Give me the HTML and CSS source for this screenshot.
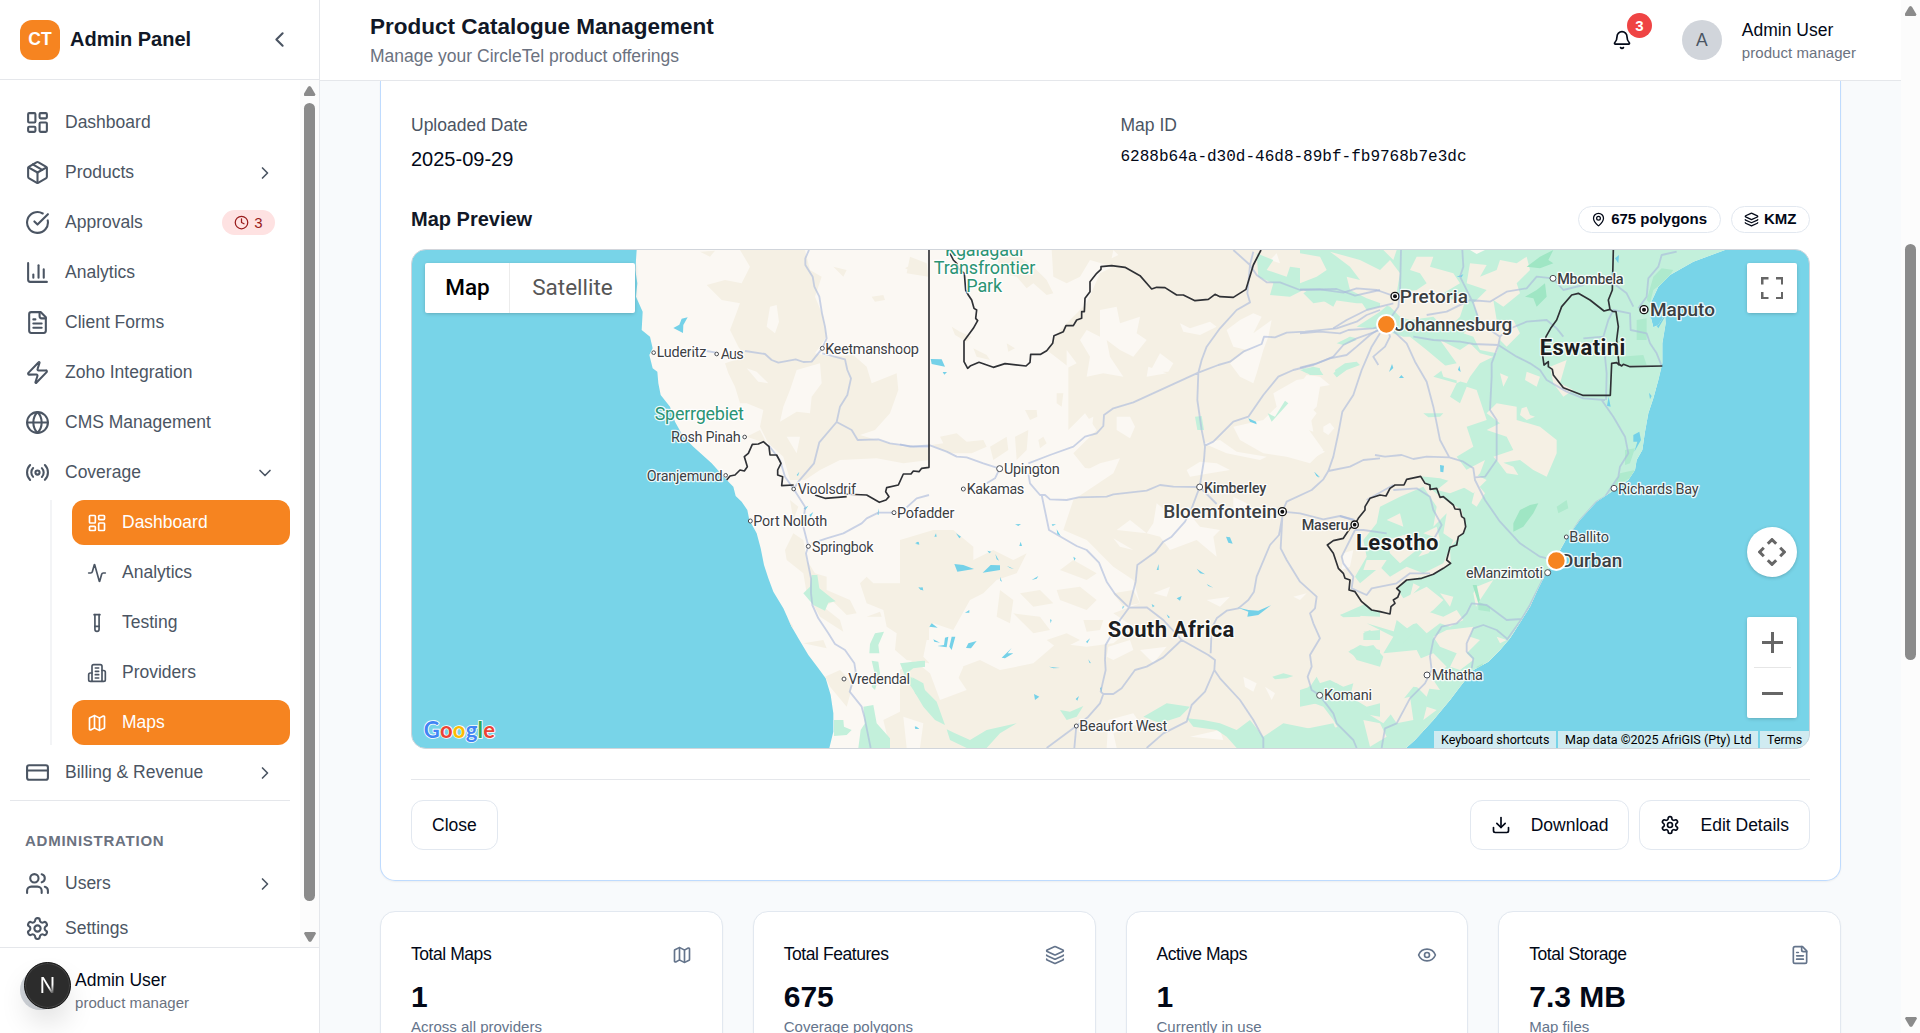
FILE: index.html
```html
<!DOCTYPE html>
<html lang="en">
<head>
<meta charset="utf-8">
<title>Admin Panel - Coverage Maps</title>
<link rel="stylesheet" href="styles.css">
</head>
<body>
<svg class="sprite" aria-hidden="true">
  <symbol id="i-dash" viewBox="0 0 24 24"><rect width="7" height="9" x="3" y="3" rx="1"/><rect width="7" height="5" x="14" y="3" rx="1"/><rect width="7" height="9" x="14" y="12" rx="1"/><rect width="7" height="5" x="3" y="16" rx="1"/></symbol>
  <symbol id="i-box" viewBox="0 0 24 24"><path d="M11 21.73a2 2 0 0 0 2 0l7-4A2 2 0 0 0 21 16V8a2 2 0 0 0-1-1.73l-7-4a2 2 0 0 0-2 0l-7 4A2 2 0 0 0 3 8v8a2 2 0 0 0 1 1.73z"/><path d="M12 22V12"/><path d="m3.3 7 8.7 5 8.7-5"/><path d="m7.5 4.27 9 5.15"/></symbol>
  <symbol id="i-check" viewBox="0 0 24 24"><path d="M21.801 10A10 10 0 1 1 17 3.335"/><path d="m9 11 3 3L22 4"/></symbol>
  <symbol id="i-chart" viewBox="0 0 24 24"><path d="M3 3v16a2 2 0 0 0 2 2h16"/><path d="M18 17V9"/><path d="M13 17V5"/><path d="M8 17v-3"/></symbol>
  <symbol id="i-file" viewBox="0 0 24 24"><path d="M15 2H6a2 2 0 0 0-2 2v16a2 2 0 0 0 2 2h12a2 2 0 0 0 2-2V7Z"/><path d="M14 2v4a2 2 0 0 0 2 2h4"/><path d="M10 9H8"/><path d="M16 13H8"/><path d="M16 17H8"/></symbol>
  <symbol id="i-zap" viewBox="0 0 24 24"><path d="M4 14a1 1 0 0 1-.78-1.63l9.9-10.2a.5.5 0 0 1 .86.46l-1.92 6.02A1 1 0 0 0 13 10h7a1 1 0 0 1 .78 1.63l-9.9 10.2a.5.5 0 0 1-.86-.46l1.92-6.02A1 1 0 0 0 11 14z"/></symbol>
  <symbol id="i-globe" viewBox="0 0 24 24"><circle cx="12" cy="12" r="10"/><path d="M12 2a14.5 14.5 0 0 0 0 20 14.5 14.5 0 0 0 0-20"/><path d="M2 12h20"/></symbol>
  <symbol id="i-radio" viewBox="0 0 24 24"><path d="M4.9 19.1C1 15.2 1 8.8 4.9 4.9"/><path d="M7.8 16.2c-2.3-2.3-2.3-6.1 0-8.5"/><circle cx="12" cy="12" r="2"/><path d="M16.2 7.8c2.3 2.3 2.3 6.1 0 8.5"/><path d="M19.1 4.9C23 8.8 23 15.1 19.1 19"/></symbol>
  <symbol id="i-pulse" viewBox="0 0 24 24"><path d="M22 12h-2.48a2 2 0 0 0-1.93 1.46l-2.35 8.36a.25.25 0 0 1-.48 0L9.24 2.18a.25.25 0 0 0-.48 0l-2.35 8.36A2 2 0 0 1 4.49 12H2"/></symbol>
  <symbol id="i-tube" viewBox="0 0 24 24"><path d="M14.5 2v17.5c0 1.4-1.1 2.5-2.5 2.5c-1.4 0-2.5-1.1-2.5-2.5V2"/><path d="M8.5 2h7"/><path d="M14.5 16h-5"/></symbol>
  <symbol id="i-building" viewBox="0 0 24 24"><path d="M6 22V4a2 2 0 0 1 2-2h8a2 2 0 0 1 2 2v18Z"/><path d="M6 12H4a2 2 0 0 0-2 2v6a2 2 0 0 0 2 2h2"/><path d="M18 9h2a2 2 0 0 1 2 2v9a2 2 0 0 1-2 2h-2"/><path d="M10 6h4"/><path d="M10 10h4"/><path d="M10 14h4"/><path d="M10 18h4"/></symbol>
  <symbol id="i-map" viewBox="0 0 24 24"><path d="M14.106 5.553a2 2 0 0 0 1.788 0l3.659-1.83A1 1 0 0 1 21 4.619v12.764a1 1 0 0 1-.553.894l-4.553 2.277a2 2 0 0 1-1.788 0l-4.212-2.106a2 2 0 0 0-1.788 0l-3.659 1.83A1 1 0 0 1 3 19.381V6.618a1 1 0 0 1 .553-.894l4.553-2.277a2 2 0 0 1 1.788 0z"/><path d="M15 5.764v15"/><path d="M9 3.236v15"/></symbol>
  <symbol id="i-card" viewBox="0 0 24 24"><rect width="20" height="14" x="2" y="5" rx="2"/><path d="M2 10h20"/></symbol>
  <symbol id="i-users" viewBox="0 0 24 24"><path d="M16 21v-2a4 4 0 0 0-4-4H6a4 4 0 0 0-4 4v2"/><circle cx="9" cy="7" r="4"/><path d="M22 21v-2a4 4 0 0 0-3-3.87"/><path d="M16 3.13a4 4 0 0 1 0 7.75"/></symbol>
  <symbol id="i-gear" viewBox="0 0 24 24"><path d="M12.22 2h-.44a2 2 0 0 0-2 2v.18a2 2 0 0 1-1 1.73l-.43.25a2 2 0 0 1-2 0l-.15-.08a2 2 0 0 0-2.73.73l-.22.38a2 2 0 0 0 .73 2.73l.15.1a2 2 0 0 1 1 1.72v.51a2 2 0 0 1-1 1.74l-.15.09a2 2 0 0 0-.73 2.73l.22.38a2 2 0 0 0 2.73.73l.15-.08a2 2 0 0 1 2 0l.43.25a2 2 0 0 1 1 1.73V20a2 2 0 0 0 2 2h.44a2 2 0 0 0 2-2v-.18a2 2 0 0 1 1-1.73l.43-.25a2 2 0 0 1 2 0l.15.08a2 2 0 0 0 2.73-.73l.22-.39a2 2 0 0 0-.73-2.73l-.15-.08a2 2 0 0 1-1-1.74v-.5a2 2 0 0 1 1-1.74l.15-.09a2 2 0 0 0 .73-2.73l-.22-.38a2 2 0 0 0-2.73-.73l-.15.08a2 2 0 0 1-2 0l-.43-.25a2 2 0 0 1-1-1.73V4a2 2 0 0 0-2-2z"/><circle cx="12" cy="12" r="3"/></symbol>
  <symbol id="i-left" viewBox="0 0 24 24"><path d="m15 18-6-6 6-6"/></symbol>
  <symbol id="i-right" viewBox="0 0 24 24"><path d="m9 18 6-6-6-6"/></symbol>
  <symbol id="i-down" viewBox="0 0 24 24"><path d="m6 9 6 6 6-6"/></symbol>
  <symbol id="i-clock" viewBox="0 0 24 24"><circle cx="12" cy="12" r="10"/><path d="M12 6v6l4 2"/></symbol>
  <symbol id="i-bell" viewBox="0 0 24 24"><path d="M10.268 21a2 2 0 0 0 3.464 0"/><path d="M3.262 15.326A1 1 0 0 0 4 17h16a1 1 0 0 0 .74-1.673C19.41 13.956 18 12.499 18 8A6 6 0 0 0 6 8c0 4.499-1.411 5.956-2.738 7.326"/></symbol>
  <symbol id="i-pin" viewBox="0 0 24 24"><path d="M20 10c0 4.993-5.539 10.193-7.399 11.799a1 1 0 0 1-1.202 0C9.539 20.193 4 14.993 4 10a8 8 0 0 1 16 0"/><circle cx="12" cy="10" r="3"/></symbol>
  <symbol id="i-layers" viewBox="0 0 24 24"><path d="M12.83 2.18a2 2 0 0 0-1.66 0L2.6 6.08a1 1 0 0 0 0 1.83l8.58 3.91a2 2 0 0 0 1.66 0l8.58-3.9a1 1 0 0 0 0-1.83z"/><path d="M2 12a1 1 0 0 0 .58.91l8.6 3.91a2 2 0 0 0 1.65 0l8.58-3.9A1 1 0 0 0 22 12"/><path d="M2 17a1 1 0 0 0 .58.91l8.6 3.91a2 2 0 0 0 1.65 0l8.58-3.9A1 1 0 0 0 22 17"/></symbol>
  <symbol id="i-download" viewBox="0 0 24 24"><path d="M21 15v4a2 2 0 0 1-2 2H5a2 2 0 0 1-2-2v-4"/><path d="m7 10 5 5 5-5"/><path d="M12 15V3"/></symbol>
  <symbol id="i-eye" viewBox="0 0 24 24"><path d="M2.062 12.348a1 1 0 0 1 0-.696 10.75 10.75 0 0 1 19.876 0 1 1 0 0 1 0 .696 10.75 10.75 0 0 1-19.876 0"/><circle cx="12" cy="12" r="3"/></symbol>
</svg>

<div class="app">
  <aside class="sidebar">
    <div class="brand">
      <span class="brand-mark">CT</span>
      <span class="brand-name">Admin Panel</span>
      <svg class="icon lg collapse"><use href="#i-left"/></svg>
    </div>
    <div class="nav-wrap">
      <nav class="nav">
        <a class="item"><svg class="icon lg"><use href="#i-dash"/></svg><span>Dashboard</span></a>
        <a class="item"><svg class="icon lg"><use href="#i-box"/></svg><span>Products</span><svg class="icon end"><use href="#i-right"/></svg></a>
        <a class="item"><svg class="icon lg"><use href="#i-check"/></svg><span>Approvals</span><em class="count"><svg class="icon sm"><use href="#i-clock"/></svg>3</em></a>
        <a class="item"><svg class="icon lg"><use href="#i-chart"/></svg><span>Analytics</span></a>
        <a class="item"><svg class="icon lg"><use href="#i-file"/></svg><span>Client Forms</span></a>
        <a class="item"><svg class="icon lg"><use href="#i-zap"/></svg><span>Zoho Integration</span></a>
        <a class="item"><svg class="icon lg"><use href="#i-globe"/></svg><span>CMS Management</span></a>
        <a class="item"><svg class="icon lg"><use href="#i-radio"/></svg><span>Coverage</span><svg class="icon end"><use href="#i-down"/></svg></a>
        <div class="sub">
          <a class="subitem active"><svg class="icon"><use href="#i-dash"/></svg><span>Dashboard</span></a>
          <a class="subitem"><svg class="icon"><use href="#i-pulse"/></svg><span>Analytics</span></a>
          <a class="subitem"><svg class="icon"><use href="#i-tube"/></svg><span>Testing</span></a>
          <a class="subitem"><svg class="icon"><use href="#i-building"/></svg><span>Providers</span></a>
          <a class="subitem active"><svg class="icon"><use href="#i-map"/></svg><span>Maps</span></a>
        </div>
        <a class="item"><svg class="icon lg"><use href="#i-card"/></svg><span>Billing &amp; Revenue</span><svg class="icon end"><use href="#i-right"/></svg></a>
        <div class="admin">
          <h3>Administration</h3>
          <a class="item"><svg class="icon lg"><use href="#i-users"/></svg><span>Users</span><svg class="icon end"><use href="#i-right"/></svg></a>
          <a class="item"><svg class="icon lg"><use href="#i-gear"/></svg><span>Settings</span></a>
        </div>
      </nav>
      <div class="scroll side-scroll"><i class="arrow up"></i><i class="thumb"></i><i class="arrow down"></i></div>
    </div>
    <div class="side-user">
      <span class="avatar"></span>
      <div class="who"><b>Admin User</b><small>product manager</small></div>
      <span class="dev-badge"><span>N</span></span>
    </div>
  </aside>

  <div class="main">
    <header class="top">
      <div class="titles">
        <h1>Product Catalogue Management</h1>
        <p>Manage your CircleTel product offerings</p>
      </div>
      <div class="bell"><svg class="icon"><use href="#i-bell"/></svg><span>3</span></div>
      <span class="avatar">A</span>
      <div class="who"><b>Admin User</b><small>product manager</small></div>
    </header>

    <div class="content">
      <section class="detail">
        <div class="facts">
          <div><label>Uploaded Date</label><p>2025-09-29</p></div>
          <div><label>Map ID</label><p class="mono">6288b64a-d30d-46d8-89bf-fb9768b7e3dc</p></div>
        </div>
        <div class="preview-head">
          <h2>Map Preview</h2>
          <span class="pill"><svg class="icon sm"><use href="#i-pin"/></svg>675 polygons</span>
          <span class="pill"><svg class="icon sm"><use href="#i-layers"/></svg>KMZ</span>
        </div>
        <div class="map">
          <svg class="canvas" viewBox="6 30 4191 1494" preserveAspectRatio="none">
            <defs>
              <clipPath id="land"><path d="M680 30L676 90 682 130 678 170 698 215 695 270 720 290 728 325 718 345 728 385 742 395 745 430 752 465 780 500 795 545 820 590 850 620 905 670 950 720 970 740 977 768 995 785 1012 810 1018 840 1040 880 1052 925 1062 975 1075 1015 1090 1055 1120 1105 1145 1160 1165 1195 1195 1245 1225 1285 1247 1315 1262 1365 1270 1420 1270 1475 1258 1524H2988L3015 1500 3070 1440 3120 1380 3150 1340 3190 1290 3235 1265 3270 1230 3300 1195 3335 1140 3360 1100 3385 1045 3405 1005 3445 940 3470 895 3510 840 3560 785 3605 755 3655 720 3675 690 3680 660 3697 630 3705 575 3715 520 3730 475 3745 420 3757 370 3757 310 3767 250 3765 225 3745 255 3730 262 3722 230 3722 190 3745 140 3780 105 3850 65 3945 30Z"/></clipPath>
            </defs>
            <g clip-path="url(#land)">
              <path class="pale" d="M600 0H4200V1560H600Z"/>
              <!-- western scrubland -->
              <path class="tan" d="M990 30H1185L1200 90 1235 110 1215 170 1240 230 1250 290 1215 340 1260 350 1330 345 1370 380 1385 430 1460 400 1465 450 1440 520 1395 570 1350 585 1400 600 1480 620 1557 625V660L1480 670 1400 655 1290 660 1230 690 1185 720 1140 720 1120 650 1075 610 1050 560 1060 510 1010 490 990 490 975 440 955 400 945 370 1005 350 985 320 960 270 975 230 990 190 935 180 890 135 945 120 995 130 1020 80ZM870 35L915 32 900 50ZM1485 85L1520 65 1520 100ZM1385 170L1420 165 1425 180 1395 185ZM1270 80L1310 90 1300 110ZM1150 880L1180 900 1190 960 1215 1000 1250 1010 1250 1050 1320 1080 1340 1120 1310 1125 1270 1085 1240 1100 1290 1140 1300 1175 1230 1130 1190 1060 1180 1000 1130 960 1125 930ZM1470 940L1557 895V1270L1490 1260 1455 1230 1460 1180 1430 1160 1420 1110 1370 1090 1350 1030 1370 1010 1390 1030 1480 1030ZM1245 1310L1290 1290 1330 1330 1310 1400 1260 1340ZM1140 780L1165 800 1150 840ZM1115 1110L1150 1160 1145 1170ZM1370 1130L1410 1115 1415 1130ZM1180 1210L1240 1200 1250 1225ZM1420 1440L1500 1400 1557 1430V1524H1440ZM1010 590L1050 570 1070 610Z"/>
              <path class="pale" d="M1080 200L1100 195 1107 245 1095 280 1070 260ZM1160 390L1230 370 1235 430 1205 470 1200 520 1160 515 1110 545 1120 500 1140 450ZM1010 385L1040 395 1075 430 1045 425ZM1130 590L1170 590 1160 640ZM1370 700L1430 680 1420 710Z"/>
              <g transform="translate(1470 0)">
                <path class="tan" d="M455 30H2000V1560H0V1290L40 1260 90 1300 120 1380 200 1350 160 1290 240 1260 300 1290 400 1270 470 1210 560 1220 640 1210 700 1160 640 1120 720 1090 700 1020 640 980 560 900 490 870 520 780 640 700 660 655 600 670 560 690 520 640 590 570 555 520 505 570V380L440 330 480 270 560 190 600 100 640 80 570 60 540 110 500 130 460 110Z"/>
                <path class="tan" d="M290 40L330 30 400 80 440 120 460 160 440 165 400 130 380 145 350 110 300 100ZM155 260L180 275 215 290 200 305 165 285ZM220 325L260 345 270 360 230 350ZM320 310L345 325 325 335ZM30 50L80 70 85 110 20 100ZM375 510L410 510 412 530 390 540ZM470 460L490 460 485 500 470 490ZM95 615L130 610 120 590 170 580 200 605 250 600 260 620 215 640 150 640ZM270 620L320 590 325 630 280 660ZM345 590L385 570 380 630 350 660ZM415 600L430 590 440 610 420 625ZM0 900L100 870 160 870 220 920 220 960 280 930 340 960 380 940 350 1000 290 1020 250 1060 210 1080 160 1170 100 1150 60 1200 0 1240ZM480 990L520 960 590 1000 560 1020ZM360 1060L420 1050 460 1090 400 1100ZM640 1060L700 1050 720 1090 670 1100ZM470 1050L540 1040 590 1080 560 1110 480 1080ZM340 1120L420 1130 450 1170 400 1180ZM300 1050L340 1080 330 1150 290 1130ZM550 1140L610 1140 600 1170 560 1175ZM440 1200L500 1180 540 1200 480 1230Z"/>
                <path class="pale" d="M600 210L650 200 660 250 720 230 710 280 740 300 700 350 660 330 620 300 630 350 670 410 610 400 560 410 570 350 540 300 560 270 600 290ZM840 250L870 265 930 245 950 260 900 285 850 275ZM980 270L1020 240 1060 220 1085 230 1060 280 1115 240 1105 290 1090 330 1070 400 1060 430 1020 410 990 370 1040 330 1000 320ZM780 340L820 370 805 395 750 395ZM640 30L655 45 635 55ZM745 380L800 400 740 410ZM650 530L690 530 705 560 690 595 650 570ZM560 540L580 530 575 570 530 600 520 580ZM1000 560L1090 540 1130 500 1120 460 1190 420 1250 410 1250 440 1210 480 1250 520 1220 560 1270 630 1230 670 1160 650 1090 640 1020 600ZM900 665L950 670 990 690 930 700 870 710 860 690ZM910 610L960 600 1010 635 1100 650 1080 660 980 640ZM1000 770L1040 790 1030 830 1000 815ZM770 790L820 830 860 840 850 800 900 860 960 870 940 890 950 950 890 900 810 930 780 890 740 880 760 850ZM690 840L740 880 650 870ZM640 895L700 930 660 920ZM820 830L870 820 880 850ZM760 1060L810 1040 800 1070ZM625 1220L690 1200 700 1230 640 1260 620 1250ZM720 1230L800 1220 760 1270ZM1030 1310L1070 1330 1060 1355 1035 1340ZM1095 1340L1125 1360 1115 1380ZM625 1440L700 1420 720 1450 640 1480 650 1524H620ZM870 1490L960 1470 970 1500ZM10 1430L70 1450 60 1524H20ZM920 1080L990 1070 960 1100ZM80 1200L140 1200 150 1250 190 1280 160 1350 130 1370 110 1290 70 1250ZM480 1000L430 1020 440 1040ZM1220 1060L1180 1070 1200 1080ZM1130 40L1110 60 1140 70ZM500 330L530 370 500 385ZM530 680L600 690 570 740 500 750Z"/>
                <path class="green" d="M1070 40L1120 60 1100 90 1160 110 1170 80 1240 90 1290 110 1310 90 1360 100 1380 130 1440 140V200L1400 210 1380 180 1310 180 1300 200 1250 170 1210 150 1170 170 1110 165 1120 130 1075 110ZM1210 30H1440V110L1380 90 1330 60 1290 70 1250 50ZM1310 310L1350 290 1370 300 1330 315ZM1205 385L1260 390 1270 405 1230 405ZM1305 390L1335 370 1370 365 1335 390 1310 412ZM885 530L905 528 912 570 892 570ZM1103 520L1125 530 1155 482 1165 490 1115 545ZM0 1270L70 1262 75 1280 40 1285 20 1300 60 1335 110 1385 135 1455 105 1440 70 1400 40 1350 20 1320ZM140 1468L165 1480 210 1500 260 1470 350 1450 300 1480 260 1524H200L150 1500ZM480 1410L510 1415 550 1398 530 1430 500 1440ZM730 1430L800 1390 870 1400 840 1430 780 1450ZM860 1435L910 1440 960 1450 1010 1470 1050 1440 1090 1490 1150 1450 1250 1470 1320 1460 1400 1480 1440 1500V1524H1010L980 1490 950 1470 880 1460ZM1117 1310L1150 1300 1180 1308 1160 1315 1125 1318ZM1225 1340L1290 1320 1330 1340 1360 1330 1350 1370 1400 1400 1440 1390 1440 1430 1380 1420 1300 1440 1270 1400 1230 1385ZM1400 880L1440 850V1000L1400 1050 1375 1040 1400 960ZM1320 1125L1400 1090 1440 1085V1130ZM1390 1175L1440 1170V1200ZM1345 1235L1380 1215 1440 1230V1270L1380 1260Z"/>
                <path class="pale" d="M1390 1010L1440 990V1030L1410 1040Z"/>
                <path class="lake" d="M92 357L125 358 135 380 95 372ZM128 396L141 396 133 404ZM1045 535L1068 545 1070 553 1050 545ZM1242 695L1258 714 1250 708ZM978 890L990 892 998 911 985 908ZM163 972L190 975 222 987 172 995ZM272 975L300 976V990L248 998ZM320 977L342 987 330 984ZM470 868L482 888 472 882ZM455 853H468L458 858ZM168 880L183 890 178 895ZM103 890L108 880 110 890ZM358 918L362 905 366 918ZM345 853L363 852 355 858ZM262 932L274 935 268 940ZM286 942L297 962 290 958ZM300 1010L306 1025 301 1022ZM395 1020L415 1008 410 1016ZM520 950L527 955 523 962ZM770 990L776 972V990ZM890 986L915 1003 900 1000ZM920 1032L940 1043 925 1038ZM830 1075L845 1068 840 1082ZM1010 1102L1045 1110 1075 1112 1113 1096 1075 1125 1042 1130 1045 1115ZM55 1040L70 1050 62 1050ZM95 1150L113 1163 88 1160ZM195 1118L208 1110V1118ZM100 1198L120 1208 103 1205ZM135 1193L145 1190 140 1222 112 1218 132 1215ZM155 1190L166 1190 155 1230 148 1220ZM205 1210L230 1203 213 1225 198 1224ZM305 1253L335 1224 323 1240 340 1240 315 1255ZM313 1262L335 1268ZM450 1138L455 1140 452 1150ZM558 1205L570 1195 562 1210ZM472 1257L485 1249ZM447 1280L480 1284 460 1285ZM565 1258L573 1270 568 1268ZM600 1345L605 1340V1358ZM402 1362L418 1370 405 1380ZM527 1377L537 1368 532 1382ZM46 1458L58 1466H46ZM755 1092L764 1098 758 1102ZM800 1123L810 1132 805 1134ZM667 1100L673 1098 668 1108ZM48 912L56 905 58 914Z"/>
              </g>
              <path class="lake" d="M815 236L833 232 820 255 819 279 790 264 808 254ZM1160 705L1168 695 1164 708ZM1181 805L1195 797 1186 810ZM1198 825L1210 816 1202 832ZM1402 823L1407 805 1406 825ZM1515 910L1523 905 1528 912ZM1525 1043L1538 1042 1540 1052ZM1514 1460L1528 1466H1516Z"/>
              <path class="green" d="M1205 1005L1222 1005 1228 1045 1277 1084 1255 1088 1245 1112 1210 1095 1180 1060 1200 1040ZM1395 1180L1422 1175 1405 1215 1408 1240 1378 1240 1380 1212ZM1385 1262L1405 1265 1410 1300 1395 1350 1385 1340 1395 1305ZM1272 1440L1300 1440 1302 1460 1325 1470 1310 1485 1272 1488ZM1360 1400L1390 1395 1400 1450 1440 1495V1524H1345L1352 1470 1365 1450ZM1485 1270L1545 1262V1280ZM1507 1312L1540 1330 1557 1405 1515 1360Z"/>
              <!-- eastern vegetation -->
              <g transform="translate(2670 0)">
                <path class="green" d="M0 30H1300V1524H140L130 1490 100 1440 170 1400 250 1450 300 1390 340 1340 420 1350 380 1290 350 1230 250 1240 280 1190 200 1150 300 1180 400 1110 430 1080 380 1040 310 1075 290 1045 320 1020 400 1003 450 970 440 960 450 922 497 870 485 810 420 770 390 745 362 709 420 715 470 730 520 760 560 720 500 690 470 650 520 620 500 560 560 540 530 450 500 440 480 490 450 470 470 430 400 410 440 380 380 330 330 290 310 290 250 270 170 260 240 215 270 190 170 190 100 180 40 190 10 160 70 120 0 90Z"/>
                <path class="tan" d="M0 40L60 50 80 90 50 110 0 130ZM90 35L180 60 240 90 270 60 300 100 290 160 350 150 380 130 360 100 330 90 350 50 400 50 390 80 460 100 480 130 430 160 460 180 500 170 480 230 440 270 400 230 330 240 300 230 270 200 200 175 150 150 140 110 180 120 150 80ZM510 70L560 75 540 110 590 90 600 60 650 70 680 50 690 90 650 130 660 160 610 200 580 180 590 240 640 240 660 280 620 320 600 300 590 340 540 330 520 290 490 280 540 240 520 190 560 150 500 130ZM420 300L480 330 510 310 540 340 580 350 540 370 510 410 500 430 430 410 420 380 470 370ZM750 380L800 360 780 430 820 450 790 470 760 430ZM680 395L720 410 710 440 675 420ZM600 400L625 410 610 440ZM560 520L590 490 650 500 650 540 720 560 770 600 770 640 740 710 700 690 660 660 600 670 580 650 640 630 620 590 560 570 600 550ZM665 505L680 500 690 525 705 530 680 540 660 525ZM590 660L640 680 655 705 620 700ZM555 660L540 700 500 740 450 760 410 750 460 710ZM470 380L490 420 470 430ZM530 730L555 760 530 800 515 790ZM530 1040L580 1020 540 1080 528 1100 520 1060ZM340 1030L360 1040 330 1070ZM300 1075L350 1080 380 1060 370 1110 430 1130 470 1110 490 1140 450 1160 420 1150 380 1180 350 1150 300 1160 280 1120ZM440 1170L520 1160 510 1190 540 1200 500 1240 520 1260 480 1290 450 1280 470 1240 420 1220 400 1190ZM590 1190L620 1200 600 1210ZM420 1060L460 1070 450 1100ZM350 1260L400 1240 440 1280 400 1310 380 1370 340 1330 320 1290ZM250 1390L330 1370 340 1440 290 1450 270 1420ZM190 1440L240 1450 260 1490 210 1520ZM170 1300L250 1280 290 1310 240 1380 190 1340ZM380 1400L410 1410 370 1440ZM250 30H290L280 60Z"/>
                <path class="tan" d="M82 915L130 895 165 853 195 810 210 775 265 765 320 718 362 709 390 745 420 770 480 808 497 860 470 890 450 922 452 970 400 1003 320 1020 290 1045 297 1065 270 1122 215 1110 165 1055 147 1050 130 1005Z"/>
                <path class="green" d="M240 800L300 770 370 740 410 800 400 860 440 820 430 880 460 900 430 970 370 1000 320 980 270 1010 240 980 180 1030 165 1010 200 950 190 900 230 850ZM370 520L430 520 420 530 385 532ZM100 400L130 375 170 365 180 375 140 390 110 412ZM0 390L40 380 60 385 60 405 20 400ZM120 310L150 290 170 295ZM0 1400L100 1380 140 1350 110 1330 60 1330 50 1310 30 1340 0 1350ZM120 1125L200 1105 180 1130 130 1132ZM190 1180L210 1170 240 1200 190 1200ZM150 1230L220 1215 250 1250 240 1280 170 1260ZM290 1140L340 1180 310 1210 280 1180ZM0 1470L100 1450 130 1524H0Z"/>
                <path class="tan" d="M260 900L330 880 350 930 300 970 270 940ZM370 880L410 860 420 900 385 940 355 950 400 890ZM260 840L300 820 310 860ZM200 960L260 960 240 990 190 990Z"/>
                <path class="pale" d="M0 430L20 405 60 410 90 435 60 440 50 500 30 520 40 575 0 560ZM0 595L75 635 30 660 0 655ZM70 560L90 548 103 565 85 585 70 575ZM510 30H555L530 42ZM130 940L160 930 150 980 125 990Z"/>
                <path class="deep" d="M680 80L720 50 760 30 745 60 760 70 720 85ZM675 170L710 150 735 130 740 170 710 200 700 175ZM640 850L660 810 690 795 715 790 700 820 670 860 640 875ZM518 1035L530 1035 540 1080 535 1090Z"/>
                <path class="deep soft" d="M770 800L800 780 805 805 775 820ZM535 1085L570 1100V1115L535 1110ZM975 630L1005 625 990 670 975 675ZM960 700L1005 690 990 715 940 740ZM1085 85L1120 90 1100 120 1060 150 1050 190 1040 180 1060 110ZM1010 240L1040 235 1040 300H1010ZM960 350L1030 345 1040 375H965ZM530 1280L550 1270 530 1310Z"/>
                <path class="lake" d="M945 55L957 45 955 70ZM1050 230L1075 215 1095 230 1075 265 1058 240ZM1000 585L1018 575 1023 600 1003 635 1012 605 1000 605ZM1047 458L1055 468 1050 478ZM921 497L926 470 932 500ZM420 675L432 677 430 697 421 695ZM267 396L276 372 280 384ZM297 414L304 405 312 414ZM43 695L60 712 50 708ZM474 390L478 377 482 396ZM470 110L490 103 485 112Z"/>
              </g>
              <!-- highways -->
              <g class="roads">
                <path d="M1197 30L1186 55V75L1208 110 1213 140 1228 170 1236 220 1245 260 1250 295 1237 325 1205 365 1180 366 1157 358 1105 368 1085 360 1065 342 1005 333M890 333L918 338M1237 340L1305 358 1312 390 1323 415 1312 465 1290 500 1280 546 1228 607 1212 670 1165 725 1151 747 1185 800 1180 860 1195 919 1188 940 1203 1015 1203 1060 1207 1095 1225 1135 1255 1180 1275 1212 1305 1230 1333 1270 1337 1295 1319 1355 1355 1400 1363 1430 1382 1524M1280 546L1325 570 1343 600 1405 598 1440 610 1510 620 1557 620M1075 615L1110 660 1125 710 1151 747M1205 910L1250 895 1300 880 1355 850 1370 835 1405 818H1452M1490 802L1520 775 1557 765"/>
                <path transform="translate(1470 0)" d="M0 613L30 620 90 616 140 635 170 650 200 652 250 670 299 686 285 715 260 730M385 670L450 645 520 620 555 590 590 580 610 558 612 525 640 505 700 487 895 398 955 375 990 365 1030 335 1085 312 1092 290 1125 292 1160 278 1215 275 1310 265 1370 245 1400 225 1440 210M385 700L390 730 420 765 435 765 450 778 500 780 535 772 620 770 640 763 740 752 780 735 820 740 899 741 950 792M425 765L447 870 530 918 560 930 597 968 620 1025 645 1062 687 1103 740 1102 790 1140 845 1200 925 1245 945 1260 943 1290 915 1355 875 1395 860 1445 790 1480 740 1524M1000 30L1050 75 1060 35M1050 75L1042 160 1050 187 1010 210 960 265 920 320 905 360 895 398 892 480 905 570 915 620 912 660 899 741 875 805 855 845 815 890 790 905 765 937 712 975 707 1025 687 1103 660 1140 617 1215 615 1260 617 1290 602 1355 610 1362 600 1390 565 1430 529 1458 440 1524M610 1362H640L665 1345 705 1290 740 1280 790 1252 845 1200M1050 75L1070 105 1100 127 1140 127 1200 150 1310 147 1365 167 1440 150M915 617L940 605 1000 545 1045 530 1090 465 1135 410 1180 390 1240 375 1300 350 1330 315 1370 295 1440 270M1440 280L1415 320 1400 355 1385 390 1360 465 1327 515 1315 580 1300 650 1285 693 1270 718 1235 750 1160 785 1147 815 1200 820 1270 838 1320 828 1364 840M1285 693L1350 680 1390 660 1440 655M1147 830L1137 885 1110 915 1070 1010 1062 1055 1045 1080 1015 1105 980 1112 950 1135 935 1165 932 1240M1147 830L1142 925 1160 960 1200 1025 1250 1070 1245 1105 1230 1120 1240 1150 1260 1195 1230 1245 1235 1280 1223 1310 1235 1350 1259 1366 1300 1420 1310 1450 1360 1500 1370 1524M943 1290L960 1315 1020 1380 1060 1440 1090 1495V1524M529 1458L523 1524"/>
                <path transform="translate(2670 0)" d="M0 148H60L130 158 170 145 230 150 285 169M303 30L300 160 295 200 259 253 220 265 145 270 120 280 60 275 0 280M280 190L200 210 140 240 100 265M259 253L210 285 170 320 140 345 90 355 50 370 0 383M448 652L490 665 520 685 525 720 555 780 600 845 660 910 720 950 769 962M259 253L320 310 345 365 380 425 400 500 412 560 420 600 448 652M259 253L270 290 255 320 220 350 235 375M225 645L255 650 305 645 340 657 380 650 448 652M340 290L400 300 480 305 520 312 595 315 650 350 690 370 720 390 740 420 800 455 850 475 915 480M380 225L440 215 490 190 510 180 570 185 620 155 680 145 710 110 759 115 790 150 850 135M487 30L490 80 480 110 520 190 540 250 600 290 595 315 575 370V410L570 510 590 540V660L555 710 525 712M600 290L620 270 680 245 740 240 770 265 790 290M850 295L910 290 925 240 940 210 990 220 992 270 1040 280 1050 310 1070 340 1085 378M940 130L980 160 1000 200M1130 35L1085 45 1075 80 1045 115 1040 170 1015 205M905 480L940 530 975 590 985 640 960 680 955 710 915 770 890 785 840 840 800 900 785 950 735 1005 690 1095 665 1137 620 1200M665 1137L620 1140 560 1095 515 1090 500 1120 470 1150 425 1160 400 1200 390 1250 395 1290 375 1330 330 1375 290 1450 255 1465 245 1524M620 1195L590 1170 550 1155 520 1165 500 1210 500 1235 520 1255 515 1285M165 870L190 870 260 880M165 870L125 950 130 970 160 1010 155 1045 200 1065 215 1045 290 1030 330 1000 390 1000M280 750L350 745 390 770 400 810 425 855 400 900M200 780L280 735M910 300L920 400 918 480M120 828L160 840"/>
              </g>
            </g>
            <!-- national borders -->
            <g class="borders">
              <path d="M1557 30V682L1535 685 1527 695 1510 693 1503 702 1480 702 1465 735 1430 743 1427 755 1437 770 1428 780 1408 787 1370 765 1300 762M1310 770L1245 775 1215 765M1151 735L1115 737 1118 710 1103 705 1103 690 1113 670 1100 645 1080 645 1077 620 1060 605 1045 612 1027 613 1015 640 1003 650 1012 680 1003 693 990 690 975 705 960 708 950 720"/>
              <path transform="translate(1470 0)" d="M150 40L160 60 170 70 175 85 193 100 197 150 205 165 215 180 222 205 230 210 227 235 233 242 220 265 192 303V365L203 385 212 377 237 367 280 382 315 371 378 378 390 367 392 343H422L440 332 458 310 462 287 490 275 498 257H520L530 240 545 235 545 215 553 215 555 175 570 155 570 125 590 100 603 88 603 80 635 77 675 82 720 107 755 147 770 142 795 143 830 165 850 165 885 182 925 178 945 163 960 170 1000 172 1038 148 1060 75 1083 30"/>
              <path transform="translate(2670 0)" d="M82 915L100 902 130 895 150 865 165 853 175 835 195 810 195 800 210 775 240 765 258 768 270 745 285 735H312L320 718 362 709 375 730 390 735 390 748 410 745 420 772 430 770 460 795 465 807 480 808 485 830 493 835 497 860 490 880 475 890 470 915 450 922 440 960 452 970 430 985 400 1003 365 1015 320 1020 290 1045 300 1055 293 1072 280 1080 285 1090 273 1100 270 1122 240 1115 215 1110 185 1085 165 1055 147 1050 150 1020 135 1015 130 1000 115 985 100 940ZM738 290L752 265 770 240 785 200 815 165 835 160 870 180 912 213 930 208 938 214 948 215 955 260 950 300 957 375 950 368 935 370 931 466H848L790 443 760 405 757 388 745 380 745 365 732 375 727 340ZM940 30L937 150 925 180 930 208M957 372L965 378 970 373 990 380 1087 378"/>
            </g>
            <g class="dots">
              <g class="town"><circle cx="731" cy="338" r="5.5"/><circle cx="920" cy="342" r="5.5"/><circle cx="1237" cy="325" r="6"/><circle cx="1004" cy="591" r="5.5"/><circle cx="947" cy="706" r="5.5"/><circle cx="1151" cy="747" r="5.5"/><circle cx="1021" cy="843" r="6"/><circle cx="1195" cy="919" r="6"/><circle cx="1302" cy="1317" r="6"/><circle cx="1452" cy="818" r="6"/><circle cx="1769" cy="686" r="9"/><circle cx="1660" cy="747" r="6"/><circle cx="2369" cy="741" r="9"/><circle cx="1999" cy="1458" r="6"/><circle cx="2729" cy="1366" r="9"/><circle cx="3429" cy="115" r="9"/><circle cx="3612" cy="745" r="9"/><circle cx="3469" cy="891" r="6"/><circle cx="3413" cy="998" r="9"/><circle cx="3051" cy="1305" r="9"/></g>
              <g class="capital"><circle cx="2617" cy="815" r="12"/><circle cx="2834" cy="854" r="11"/><circle cx="2955" cy="169" r="12"/><circle cx="3702" cy="209" r="12"/></g>
              <g class="core"><circle cx="2617" cy="815" r="6"/><circle cx="2834" cy="854" r="5.5"/><circle cx="2955" cy="169" r="6"/><circle cx="3702" cy="209" r="6"/></g>
            </g>
            <g class="labels">
              <text x="740" y="352" textLength="149">Luderitz</text><text x="932" y="357" textLength="69">Aus</text><text x="1246" y="341" textLength="281">Keetmanshoop</text>
              <text class="park" x="734" y="541" textLength="268">Sperrgebiet</text>
              <text x="783" y="607" textLength="209">Rosh Pinah</text><text x="710" y="722" textLength="228">Oranjemund</text><text x="1163" y="763" textLength="175">Vioolsdrif</text><text x="1030" y="859" textLength="222">Port Nolloth</text><text x="1206" y="935" textLength="185">Springbok</text><text x="1461" y="835" textLength="172">Pofadder</text><text x="1315" y="1333" textLength="185">Vredendal</text>
              <text class="park" x="1605" y="49" textLength="235">Kgalagadi</text><text class="park" x="1571" y="103" textLength="305">Transfrontier</text><text class="park" x="1669" y="155" textLength="107">Park</text>
              <text x="1782" y="701" textLength="167">Upington</text><text x="1670" y="763" textLength="173">Kakamas</text><text class="mid" x="2382" y="758" textLength="187">Kimberley</text><text class="city" x="2260" y="833" textLength="341">Bloemfontein</text><text class="mid" x="2675" y="870" textLength="141">Maseru</text>
              <text class="country" x="2093" y="1190" textLength="380">South Africa</text><text x="2008" y="1474" textLength="264">Beaufort West</text><text x="2742" y="1381" textLength="144">Komani</text>
              <text class="mid" x="3442" y="131" textLength="199">Mbombela</text><text class="city" x="2969" y="188" textLength="205">Pretoria</text><text class="city" x="2953" y="274" textLength="354">Johannesburg</text><text class="country" x="3389" y="344" textLength="257">Eswatini</text><text class="city" x="3720" y="229" textLength="195">Maputo</text>
              <text x="3624" y="761" textLength="242">Richards Bay</text><text x="3478" y="907" textLength="119">Ballito</text><text class="city" x="3453" y="980" textLength="184">Durban</text><text x="3168" y="1015" textLength="231">eManzimtoti</text><text class="country" x="2838" y="930" textLength="247">Lesotho</text><text x="3065" y="1321" textLength="154">Mthatha</text>
            </g>
            <g class="sites"><circle cx="2929" cy="253" r="28"/><circle cx="3439" cy="962" r="28"/></g>
            <text class="google" x="41" y="1495" textLength="214"><tspan fill="#4285f4">G</tspan><tspan fill="#ea4335">o</tspan><tspan fill="#fbbc04">o</tspan><tspan fill="#4285f4">g</tspan><tspan fill="#34a853">l</tspan><tspan fill="#ea4335">e</tspan></text>
          </svg>
          <div class="types"><span class="on">Map</span><span>Satellite</span></div>
          <div class="ctl full"><svg viewBox="0 0 18 18"><path d="M0 0v6h2V2h4V0H0zm16 0h-4v2h4v4h2V0h-2zm0 16h-4v2h6v-6h-2v4zM2 12H0v6h6v-2H2v-4z"/></svg></div>
          <div class="ctl pan"><svg viewBox="0 0 28 28"><path d="m9.800 5.800 4.200-4.200 4.200 4.200M9.800 22.200l4.200 4.200 4.200-4.200M5.800 9.800 1.600 14l4.200 4.200M22.200 9.800l4.200 4.200-4.200 4.200"/></svg></div>
          <div class="ctl zoom"><span class="plus"></span><hr><span class="minus"></span></div>
          <div class="legal"><span>Keyboard shortcuts</span><span>Map data ©2025 AfriGIS (Pty) Ltd</span><span>Terms</span></div>
        </div>
        <div class="actions">
          <button>Close</button>
          <button class="push"><svg class="icon"><use href="#i-download"/></svg>Download</button>
          <button><svg class="icon"><use href="#i-gear"/></svg>Edit Details</button>
        </div>
      </section>

      <section class="stats">
        <article><header>Total Maps<svg class="icon"><use href="#i-map"/></svg></header><strong>1</strong><p>Across all providers</p></article>
        <article><header>Total Features<svg class="icon"><use href="#i-layers"/></svg></header><strong>675</strong><p>Coverage polygons</p></article>
        <article><header>Active Maps<svg class="icon"><use href="#i-eye"/></svg></header><strong>1</strong><p>Currently in use</p></article>
        <article><header>Total Storage<svg class="icon"><use href="#i-file"/></svg></header><strong>7.3 MB</strong><p>Map files</p></article>
      </section>
    </div>
  </div>
  <div class="scroll page-scroll"><i class="arrow up"></i><i class="thumb"></i><i class="arrow down"></i></div>
</div>
</body>
</html>
```
FILE: styles.css
```css
* { box-sizing: border-box; margin: 0; padding: 0; }
body { font-family: "Liberation Sans", Arial, sans-serif; font-size: 17.5px; line-height: 25px; color: #020817; background: #f8fafc; }
.sprite { display: none; }
.app { display: flex; height: 1033px; overflow: hidden; }

.icon { width: 20px; height: 20px; flex: none; fill: none; stroke: currentColor; stroke-width: 2; stroke-linecap: round; stroke-linejoin: round; }
.icon.lg { width: 25px; height: 25px; }
.icon.sm { width: 15px; height: 15px; }

/* Sidebar */
.sidebar { display: flex; flex-direction: column; width: 320px; flex: none; background: #fff; border-right: 1px solid #e5e7eb; }
.brand { display: flex; align-items: center; flex: none; height: 80px; padding: 0 20px; border-bottom: 1px solid #e5e7eb; }
.brand-mark { width: 40px; height: 40px; border-radius: 12px; background: #f68420; color: #fff; font-weight: 700; text-align: center; line-height: 38px; }
.brand-name { margin-left: 10px; font-size: 20px; font-weight: 700; color: #111827; }
.collapse { margin-left: auto; margin-right: 7px; color: #4b5563; }
.nav-wrap { display: flex; flex: none; height: 867px; overflow: hidden; }
.nav { flex: 1; padding: 20px 10px 0; }
.item { display: flex; align-items: center; gap: 15px; height: 45px; margin-bottom: 5px; padding: 0 15px; color: #4b5563; }
.item .end { margin-left: auto; }
.count { display: flex; align-items: center; gap: 5px; height: 25px; margin-left: auto; padding: 0 12.5px; border-radius: 13px; background: #fee2e2; color: #991b1b; font-style: normal; font-size: 15px; }
.sub { display: flex; flex-direction: column; gap: 5px; margin: 0 0 5px 40px; padding-left: 20px; border-left: 2px solid #f3f4f6; }
.subitem { display: flex; align-items: center; gap: 15px; height: 45px; padding: 0 15px; border-radius: 12px; color: #4b5563; }
.subitem.active { background: #f68420; color: #fff; }
.admin { padding-top: 30px; border-top: 1px solid #e5e7eb; }
.admin h3 { height: 30px; padding-left: 15px; font-size: 15px; line-height: 20px; letter-spacing: .75px; text-transform: uppercase; color: #6b7280; }
.admin .item { height: 45px; margin: 0; }
.side-user { position: relative; display: flex; align-items: center; gap: 15px; flex: 1; padding: 0 20px 1px; border-top: 1px solid #e5e7eb; }
.avatar { width: 40px; height: 40px; flex: none; border-radius: 50%; background: #d1d5db; color: #4b5563; text-align: center; line-height: 40px; }
.who b { display: block; font-weight: 400; line-height: 25px; color: #020817; }
.who small { display: block; font-size: 15px; line-height: 20px; letter-spacing: .05px; color: #6b7280; }
.dev-badge { position: absolute; left: 24px; top: 14px; display: flex; align-items: center; justify-content: center; width: 47px; height: 47px; border-radius: 50%; background: #2c2c2c; border: 1px solid #111; box-shadow: inset 0 0 0 1px #444, 0 16px 32px -8px rgba(0,0,0,.24); }
.dev-badge span { font: 400 21px/26px Inter, sans-serif; color: transparent; background: linear-gradient(140deg, #fff 58%, rgba(255,255,255,.1) 82%); -webkit-background-clip: text; background-clip: text; }

/* Scroll tracks */
.scroll { display: flex; flex-direction: column; align-items: center; width: 19px; background: #fcfcfc; flex: none; }
.thumb { width: 11px; border-radius: 6px; background: #8b8b8b; }
.arrow { width: 12px; height: 10px; background: #8b8b8b; clip-path: polygon(50% 0, 62% 8%, 100% 85%, 92% 100%, 8% 100%, 0 85%, 38% 8%); }
.arrow.down { transform: rotate(180deg); margin-top: auto; }
.side-scroll .up { margin: 6px 0 7px; }
.side-scroll .thumb { height: 798px; }
.side-scroll .down { margin-bottom: 5px; }
.page-scroll .up { margin: 6px 0 228px; }
.page-scroll .thumb { height: 416px; }
.page-scroll .down { margin-bottom: 6px; }

/* Header */
.main { flex: 1; min-width: 0; }
.top { display: flex; align-items: center; height: 81px; padding: 0 45px 0 50px; background: #fff; border-bottom: 1px solid #e5e7eb; }
.titles { flex: 1; }
h1 { font-size: 22.5px; line-height: 30px; color: #111827; }
.titles p { padding-top: 2px; color: #6b7280; line-height: 25px; }
.bell { position: relative; width: 20px; height: 20px; margin-right: 50px; }
.bell span { position: absolute; left: 15px; top: -17px; display: block; width: 25px; height: 25px; border-radius: 50%; background: #ef4444; color: #fff; font-size: 15px; font-weight: 700; line-height: 25px; text-align: center; }
.top .who { margin-left: 20px; }

/* Map detail card */
.content { padding: 0 60px; }
.detail { height: 800px; padding: 32px 30px 0; background: #fff; border: 1px solid #bfdbfe; border-top: 0; border-radius: 0 0 15px 15px; box-shadow: 0 1px 2px rgba(0,0,0,.05); }
.facts { display: grid; grid-template-columns: 1fr 1fr; column-gap: 20px; }
.facts label { display: block; margin-bottom: 6px; color: #4b5563; }
.facts p { font-size: 20px; line-height: 30px; }
.facts .mono { padding-top: 1px; font-family: "Liberation Mono", monospace; font-size: 16.03px; line-height: 25px; }
.preview-head { display: flex; align-items: center; gap: 10px; height: 30px; margin: 30px 0 15px; }
h2 { flex: 1; font-size: 20px; line-height: 30px; color: #111827; }
.pill { display: flex; align-items: center; gap: 5px; height: 27px; padding: 0 12.5px; border: 1px solid #e2e8f0; border-radius: 14px; font-size: 15px; line-height: 24px; font-weight: 700; }
.actions { display: flex; gap: 10px; margin-top: 30px; padding-top: 20px; border-top: 1px solid #e5e7eb; }
button { display: flex; align-items: center; height: 50px; padding: 0 20px; border: 1px solid #e2e8f0; border-radius: 12px; background: #fff; font: inherit; color: #020817; }
button .icon { margin-right: 20px; }
.push { margin-left: auto; }

/* Map */
.map { position: relative; height: 500px; border: 1px solid #d1d5db; border-radius: 15px; overflow: hidden; background: #78d4e8; font-family: Roboto, sans-serif; }
.canvas { display: block; width: 100%; height: 100%; }
.pale { fill: #fbf8f3; }
.tan { fill: #f5f0e4; }
.green { fill: #c3f0db; }
.deep { fill: #9fe6c4; }
.deep.soft { fill: #aeeacd; }
.lake { fill: #74d1e8; }
.roads { fill: none; stroke: #aab9dc; stroke-opacity: .62; stroke-width: 5.5; stroke-linejoin: round; }
.borders { fill: none; stroke: #2f3135; stroke-width: 5; stroke-linejoin: round; }
.town { fill: #fff; stroke: #4a4d52; stroke-width: 3; }
.capital { fill: #fff; stroke: #111; stroke-width: 4; }
.core { fill: #111; }
.labels text { font-size: 43.5px; fill: #3c4043; stroke: #fff; stroke-opacity: .85; stroke-width: 8px; stroke-linejoin: round; paint-order: stroke; }
.labels .mid { font-weight: 500; }
.labels .city { font-size: 57px; font-weight: 500; }
.labels .country { font-size: 66px; font-weight: 700; fill: #1c1e21; }
.labels .park { font-size: 54px; fill: #2a9474; }
.sites { fill: #f68420; stroke: #fff; stroke-width: 6; }
.google { font: 700 66px Lato, sans-serif; stroke: #fff; stroke-width: 5px; paint-order: stroke; }
.types { position: absolute; left: 13px; top: 13px; display: flex; height: 50px; border-radius: 2px; background: #fff; box-shadow: 0 1px 4px -1px rgba(0,0,0,.3); font-size: 22.5px; line-height: 48px; color: #565656; }
.types span { width: 125px; text-align: center; }
.types .on { width: 85px; padding-left: 1px; border-right: 1px solid #ececec; color: #000; font-weight: 500; }
.ctl { position: absolute; right: 12px; display: flex; align-items: center; justify-content: center; width: 50px; height: 50px; border-radius: 2px; background: #fff; box-shadow: 0 1px 4px -1px rgba(0,0,0,.3); }
.full { top: 13px; }
.full svg { width: 22.5px; height: 22.5px; fill: #666; }
.pan { top: 277px; border-radius: 50%; }
.pan svg { width: 28px; height: 28px; fill: none; stroke: #666; stroke-width: 3; }
.zoom { top: 367px; height: 101px; flex-direction: column; justify-content: space-between; }
.zoom hr { width: 37px; border: 0; height: 1px; background: #e6e6e6; }
.plus, .minus { width: 21px; height: 50px; background: linear-gradient(#666, #666) center / 21px 3px no-repeat; }
.plus { background: linear-gradient(#666, #666) center / 21px 3px no-repeat, linear-gradient(#666, #666) center / 3px 21px no-repeat; }
.legal { position: absolute; right: 0; bottom: 0; display: flex; gap: 2px; font-size: 12.5px; line-height: 17px; color: #000; white-space: nowrap; }
.legal span { padding: 0 6.8px; background: rgba(245,245,245,.7); }

/* Stat cards */
.stats { display: grid; grid-template-columns: repeat(4, 1fr); gap: 30px; margin-top: 30px; }
.stats article { height: 170px; padding: 30px; background: #fff; border: 1px solid #e2e8f0; border-radius: 15px; box-shadow: 0 1px 2px rgba(0,0,0,.05); }
.stats header { display: flex; align-items: center; justify-content: space-between; margin-bottom: 10px; letter-spacing: -.44px; }
.stats .icon { color: #64748b; }
.stats strong { display: block; font-size: 30px; line-height: 40px; }
.stats p { font-size: 15px; line-height: 20px; color: #64748b; }
```
